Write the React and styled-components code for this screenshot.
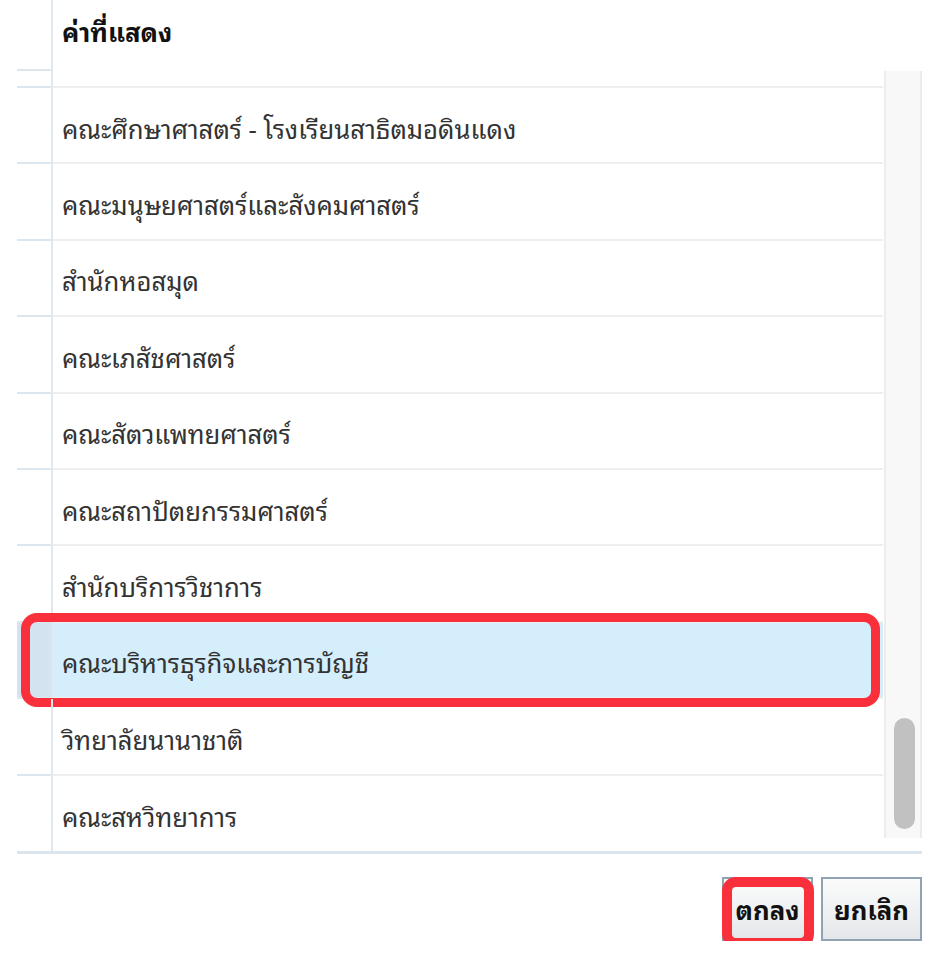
import React from "react";
import styled, { createGlobalStyle } from "styled-components";

const GlobalStyle = createGlobalStyle`
  body {
    margin: 0;
    background: #ffffff;
    font-family: Tahoma, "Noto Sans Thai Looped", "Noto Sans Thai", "Noto Sans", "DejaVu Sans", sans-serif;
  }
`;

const items = [
  "คณะศึกษาศาสตร์ - โรงเรียนสาธิตมอดินแดง",
  "คณะมนุษยศาสตร์และสังคมศาสตร์",
  "สำนักหอสมุด",
  "คณะเภสัชศาสตร์",
  "คณะสัตวแพทยศาสตร์",
  "คณะสถาปัตยกรรมศาสตร์",
  "สำนักบริการวิชาการ",
  "คณะบริหารธุรกิจและการบัญชี",
  "วิทยาลัยนานาชาติ",
  "คณะสหวิทยาการ",
];

const App = () => {
  return (
    <>
      <GlobalStyle />
      <Dialog>
        <HeaderRow>
          <SideCell header />
          <HeaderCell>ค่าที่แสดง</HeaderCell>
        </HeaderRow>
        <Body>
          <List>
            <Row partial>
              <SideCell />
              <MainCell />
            </Row>
            {items.map((label, i) => (
              <Row key={label} selected={i === 7} last={i === items.length - 1}>
                <SideCell selected={i === 7} last={i === items.length - 1} />
                <MainCell selected={i === 7} last={i === items.length - 1}>
                  {label}
                </MainCell>
              </Row>
            ))}
          </List>
          <Track>
            <Thumb />
          </Track>
        </Body>
        <Footer>
          <Button highlight>ตกลง</Button>
          <Button>ยกเลิก</Button>
        </Footer>
      </Dialog>
    </>
  );
};

const Dialog = styled.div`
  width: 905px;
  margin-left: 17px;
  display: flex;
  flex-direction: column;
`;

const HeaderRow = styled.div`
  display: flex;
  height: 71px;
`;

const SideCell = styled.div`
  width: 36px;
  flex: none;
  box-sizing: border-box;
  border-right: 2px solid #dfe8ef;
  border-bottom: ${(p) => (p.last ? "none" : "2px solid #dbe6ee")};
  height: ${(p) => (p.header ? "71px" : "auto")};
  background: ${(p) => (p.selected ? "#d3e4f0" : "transparent")};
`;

const HeaderCell = styled.div`
  flex: 1;
  display: flex;
  align-items: center;
  padding-left: 9px;
  padding-bottom: 11px;
  font-size: 25.7px;
  font-weight: bold;
  color: #111;
`;

const Body = styled.div`
  display: flex;
  align-items: flex-start;
  border-bottom: 3px solid #dae5ed;
`;

const List = styled.div`
  width: 866px;
  display: flex;
  flex-direction: column;
`;

const Row = styled.div`
  position: relative;
  display: flex;
  box-sizing: border-box;
  height: ${(p) => (p.partial ? "17px" : p.last ? "75px" : "76.4px")};

  &::after {
    content: "";
    display: ${(p) => (p.selected ? "block" : "none")};
    position: absolute;
    left: 4px;
    right: 3px;
    top: -10px;
    bottom: -8px;
    border: 9px solid #f9303c;
    border-radius: 16px;
    pointer-events: none;
  }
`;

const MainCell = styled.div`
  flex: 1;
  display: flex;
  align-items: center;
  padding-left: 9px;
  padding-top: ${(p) => (p.children ? "4px" : "0")};
  box-sizing: border-box;
  border-bottom: ${(p) => (p.last ? "none" : "2px solid #eeeeee")};
  font-size: 25.7px;
  color: #333;
  background: ${(p) => (p.selected ? "#d5eefc" : "transparent")};
`;

const Track = styled.div`
  margin-left: 1px;
  width: 38px;
  height: 767px;
  box-sizing: border-box;
  background: #f8f8f8;
  border-left: 2px solid #ececec;
  border-right: 2px solid #ececec;
  padding-top: 647px;
  padding-left: 8px;
`;

const Thumb = styled.div`
  width: 21px;
  height: 111px;
  border-radius: 11px;
  background: #c1c1c1;
`;

const Footer = styled.div`
  display: flex;
  justify-content: flex-end;
  gap: 8px;
  padding-top: 23px;
`;

const Button = styled.button`
  position: relative;
  height: 64px;
  width: ${(p) => (p.highlight ? "91px" : "101px")};
  box-sizing: border-box;
  border: 2px solid #8fa3b5;
  background: linear-gradient(#fbfbfb, #e4e7ea);
  font-family: inherit;
  font-size: 25.7px;
  font-weight: bold;
  color: #111;
  padding: 0;

  &::after {
    content: "";
    display: ${(p) => (p.highlight ? "block" : "none")};
    position: absolute;
    left: -2px;
    right: -3px;
    top: -2px;
    bottom: -9px;
    border: 10px solid #f9303c;
    border-radius: 14px;
  }
`;

export default App;
